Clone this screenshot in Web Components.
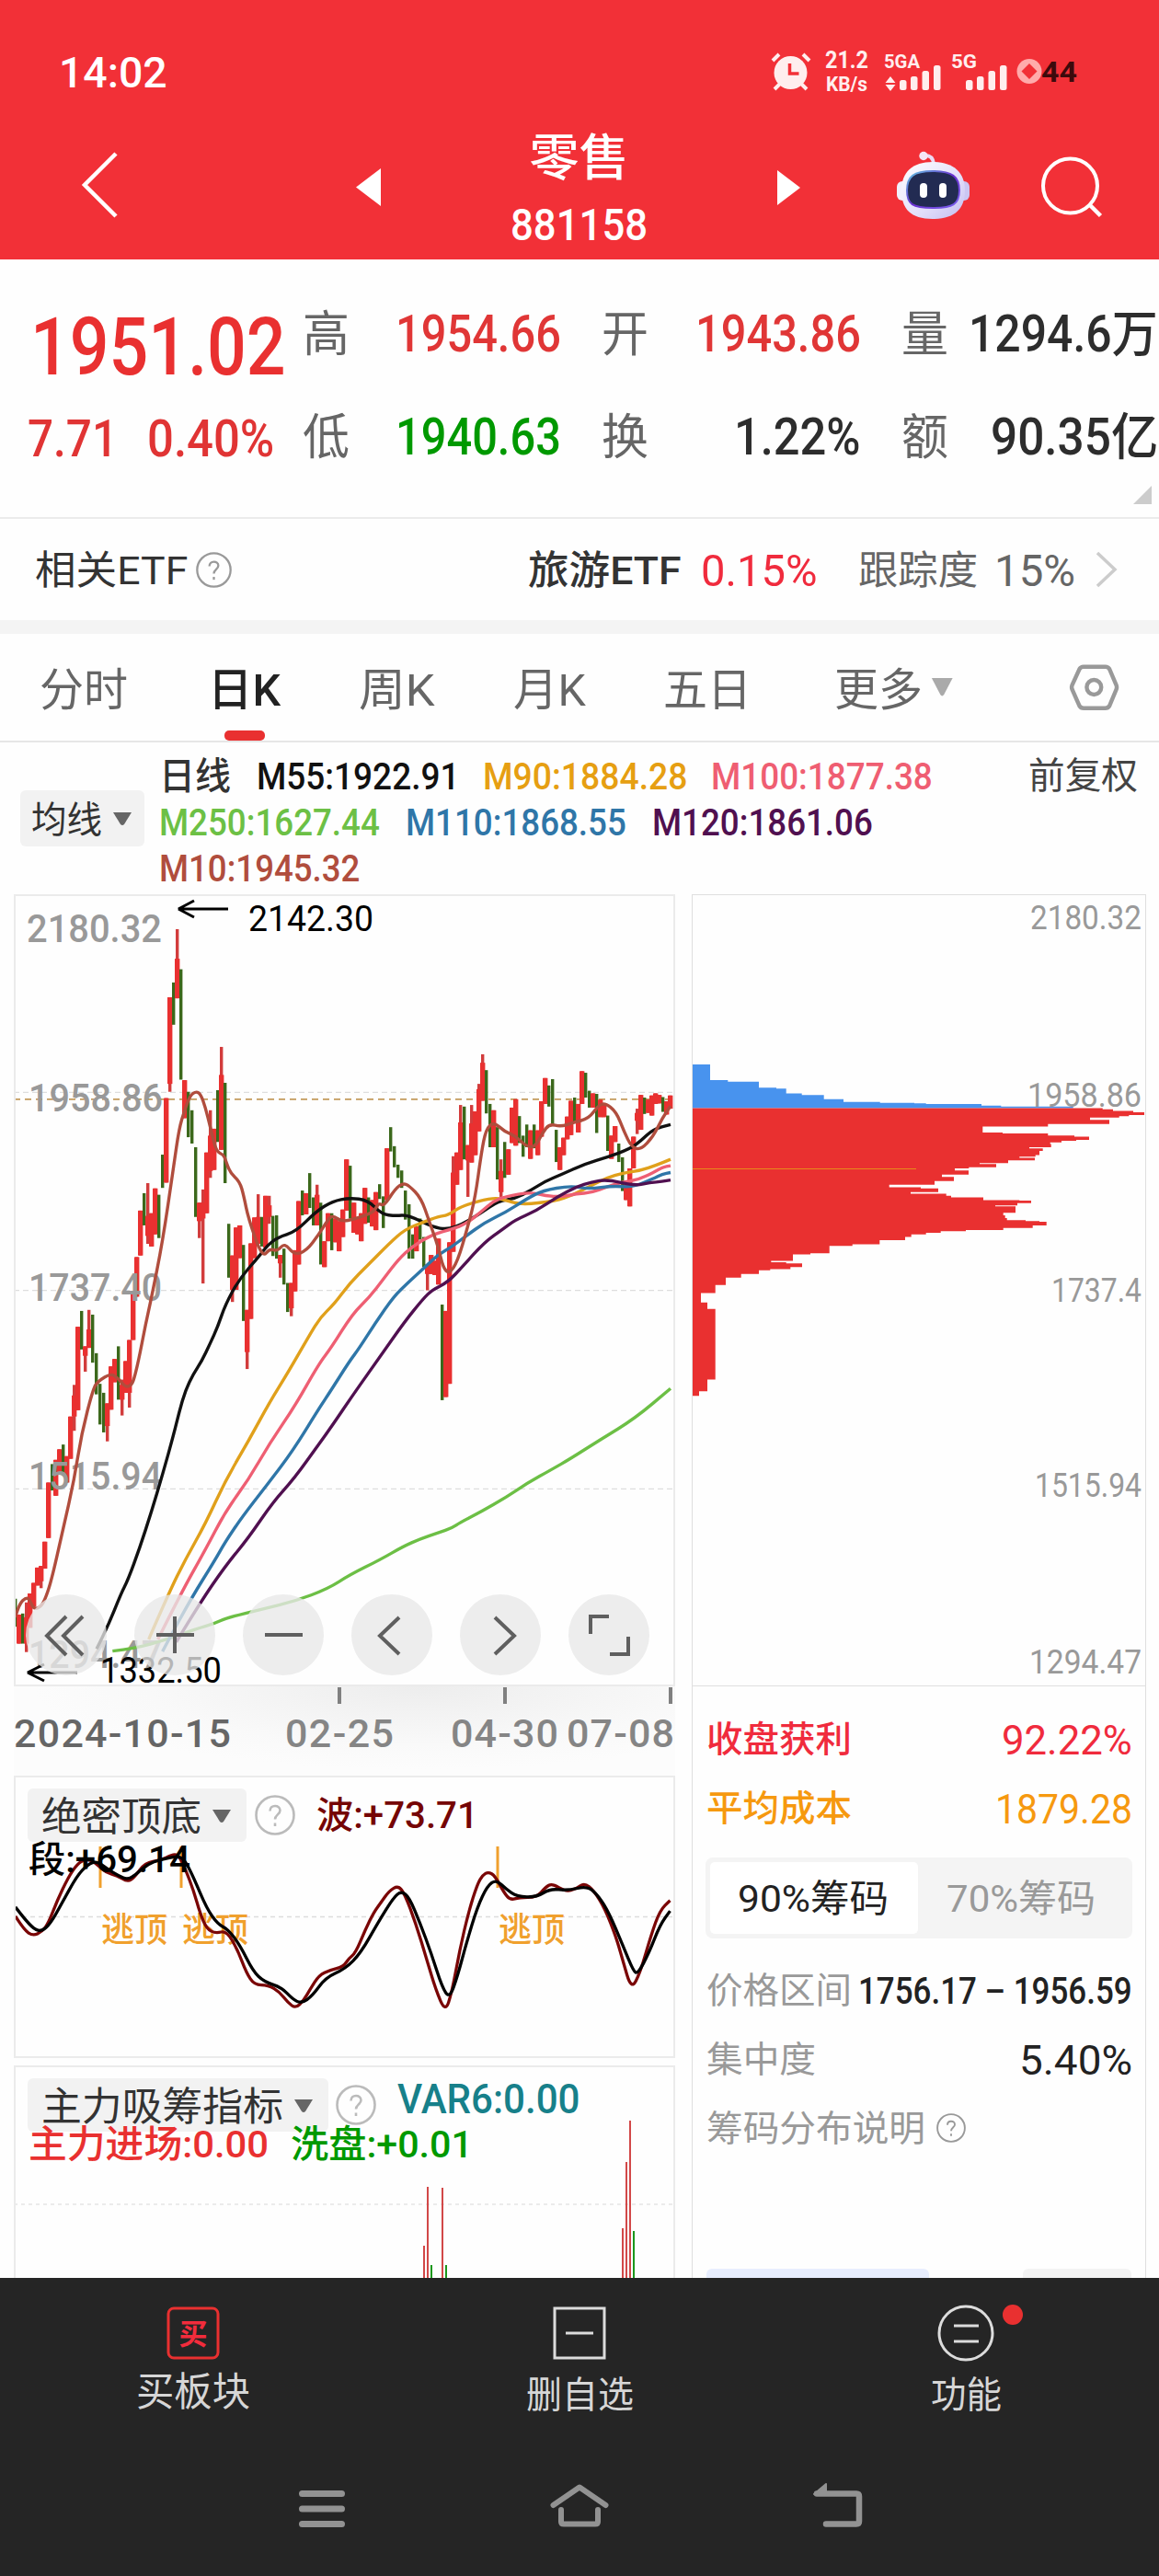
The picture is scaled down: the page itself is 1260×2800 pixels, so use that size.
<!DOCTYPE html>
<html lang="zh-CN">
<head>
<meta charset="UTF-8">
<title>零售 881158</title>
<style>
    body {
        margin: 0;
        width: 1260px;
        height: 2800px;
        overflow: hidden;
        background: #fefefe;
        color: #333;
        font-family: Roboto, "Noto Sans CJK SC", sans-serif;
    }
</style>
</head>
<body>
<app-header name="零售" code="881158"></app-header>
<quote-board></quote-board>
<etf-row></etf-row>
<period-tabs></period-tabs>
<ma-legend></ma-legend>
<chart-area>
    <k-chart slot="main"></k-chart>
    <date-axis slot="main"></date-axis>
    <indicator-panel slot="main" id="wave" style="height:307px">
        <pick-button slot="head" w="174">绝密顶底</pick-button>
        <help-icon slot="head" size="44" style="margin-left:9px;color:#bbb"></help-icon>
        <fit-text slot="head" w="176" size="40" style="margin:2px 0 0 23px;color:#750505;font-weight:500">波:+73.71</fit-text>
        <fit-text slot="values" w="176" size="40" style="color:#000;font-weight:500">段:+69.14</fit-text>
    </indicator-panel>
    <indicator-panel slot="main" id="force" style="height:260px;margin-top:8px;--lift:-6px">
        <pick-button slot="head" w="263">主力吸筹指标</pick-button>
        <help-icon slot="head" size="44" style="margin-left:8px;color:#bbb"></help-icon>
        <fit-text slot="head" w="199" size="44" style="margin:0 0 12px 23px;color:#17808a;font-weight:500">VAR6:0.00</fit-text>
        <fit-text slot="values" w="261" size="41" style="color:#e93030;font-weight:500">主力进场:0.00</fit-text>
        <fit-text slot="values" w="198" size="41" style="margin-left:24px;color:#009900;font-weight:500">洗盘:+0.01</fit-text>
    </indicator-panel>
    <chip-chart slot="side"></chip-chart>
    <chip-stats slot="side"></chip-stats>
</chart-area>
<bottom-bar></bottom-bar>

<script>
const FONT = 'Roboto, "Noto Sans CJK SC", sans-serif';

// base class: open shadow root filled from render()
class Base extends HTMLElement {
    connectedCallback() {
        if (this.shadowRoot) return;
        this.attachShadow({ mode: "open" });
        this.shadowRoot.innerHTML = this.render();
    }
}

// svg text, y is the middle of the digits
function label(x, y, w, size, text, fill, extra = "", adjust = "spacingAndGlyphs") {
    return `<text x="${x}" y="${y + size * 0.356}" textLength="${w}" lengthAdjust="${adjust}" font-size="${size}" fill="${fill}" ${extra}>${text}</text>`;
}

// TEXT OF A GIVEN WIDTH
class FitText extends Base {
    connectedCallback() {
        super.connectedCallback();
        const span = this.shadowRoot.querySelector("span");
        const natural = span.offsetWidth;
        if (natural) span.style.transform = `scaleX(${this.getAttribute("w") / natural})`;
    }
    render() {
        return `
            <style>
                :host { display: block; flex: none; width: ${this.getAttribute("w")}px; font-size: ${this.getAttribute("size")}px; line-height: 1; white-space: nowrap; }
                span { display: inline-block; transform-origin: 0 50%; }
            </style>
            <span><slot></slot></span>
        `;
    }
}

// QUESTION MARK IN A CIRCLE
class HelpIcon extends Base {
    render() {
        const s = this.getAttribute("size");
        return `
            <style>:host { display: block; flex: none; width: ${s}px; height: ${s}px; }</style>
            <svg width="${s}" height="${s}" viewBox="0 0 44 44" fill="none" stroke="currentColor" stroke-width="2.6">
                <circle cx="22" cy="22" r="20.5"/>
                <path d="M16.5 17.5c0-7.500 11-7 11-.8 0 4.600-5.500 4.800-5.500 9.800"/>
                <path d="M22 30.500v3.500"/>
            </svg>
        `;
    }
}

// GREY DROPDOWN BUTTON
class PickButton extends Base {
    render() {
        return `
            <style>
                :host { display: flex; flex: none; align-items: center; box-sizing: border-box; height: 58px; padding: 4px 17px 0 15px; gap: 12px; background: #f2f2f2; border-radius: 6px; color: #333; }
                svg { margin-bottom: 3px; }
            </style>
            <fit-text w="${this.getAttribute("w")}" size="${this.getAttribute("size") || 43}"><slot></slot></fit-text>
            <svg width="20" height="14"><path d="M0 0h20l-8 13q-2 2-4 0z" fill="#666"/></svg>
        `;
    }
}

// STATUS BAR + TITLE
class AppHeader extends Base {
    render() {
        const bars = x => [[0, 87], [12, 83], [24.5, 77], [37, 71]]
            .map(([dx, y]) => `<rect x="${x + dx}" y="${y}" width="7.500" height="${98 - y}" rx="2.500"/>`).join("");
        return `
            <style>
                :host { display: block; height: 282px; background: #f23037; color: #fff; }
                .status { display: flex; height: 120px; padding-left: 64px; font-weight: 500; }
                .status fit-text { margin: 56px auto 0 0; }
                .bar { display: flex; height: 162px; align-items: center; }
                .title { display: flex; flex-direction: column; align-items: center; width: 431px; height: 162px; }
            </style>
            <div class="status">
                <fit-text w="118" size="46">14:02</fit-text>
                <svg width="430" height="120" viewBox="830 0 430 120" font-family='${FONT}' fill="#ffeeee">
                    <circle cx="859.5" cy="79" r="18"/>
                    <path d="M840 66l7-7M873 59l7 7M849 90l-7 7M870 90l7 7" stroke="#ffeeee" stroke-width="4"/>
                    <path d="M858.500 69v11h10" fill="none" stroke="#f23037" stroke-width="3.500"/>
                    ${label(897, 65.5, 47, 25, "21.2", "#ffeeee", 'font-weight="700"')}
                    ${label(898, 91, 45, 22, "KB/s", "#ffeeee", 'font-weight="700"')}
                    ${label(961, 67, 39, 20, "5GA", "#ffeeee", 'font-weight="700"')}
                    <path d="M962.500 90l5.500-7 5.500 7zM962.500 92h11l-5.500 7z"/>
                    ${bars(978)}
                    ${label(1034, 67, 28, 20, "5G", "#ffeeee", 'font-weight="700"')}
                    ${bars(1050)}
                    <circle cx="1119" cy="77.5" r="13.500" fill="#ffabab"/>
                    <path d="M1119 69l8.500 8.500-8.500 8.500-8.500-8.500z" fill="#f23037"/>
                    ${label(1132, 77.5, 39, 31, "44", "#3d0a0c", 'font-weight="700"')}
                </svg>
            </div>
            <div class="bar">
                <svg width="130" height="162"><path d="M126 47L92 81l34 34" fill="none" stroke="#fff" stroke-width="4.500"/></svg>
                <svg width="284" height="162"><path d="M284 63v41l-27-20.500z" fill="#fff"/></svg>
                <div class="title">
                    <fit-text w="108" size="54" style="margin-top:26px;font-weight:500">${this.getAttribute("name")}</fit-text>
                    <fit-text w="149" size="49" style="margin-top:20px;font-weight:500">${this.getAttribute("code")}</fit-text>
                </div>
                <svg width="415" height="162" viewBox="845 120 415 162">
                    <defs>
                        <linearGradient id="shell" x1="0" y1="0" x2="1" y2="1"><stop offset="0" stop-color="#fff"/><stop offset=".6" stop-color="#e2defa"/><stop offset="1" stop-color="#c3bdf0"/></linearGradient>
                        <linearGradient id="rim" x1="0" y1="0" x2="1" y2="1"><stop offset="0" stop-color="#62c8e0"/><stop offset=".5" stop-color="#6a2fd0"/><stop offset="1" stop-color="#7a63ee"/></linearGradient>
                    </defs>
                    <path d="M845 185v38l25-19z" fill="#fff"/>
                    <path d="M1004 169q10-1 11 9" fill="none" stroke="#ecd9f2" stroke-width="4"/>
                    <circle cx="1004" cy="169.500" r="4.700" fill="#f5e6f6"/>
                    <rect x="975" y="197" width="14" height="21" rx="6" fill="#f1effc"/>
                    <rect x="1040" y="197" width="14" height="21" rx="6" fill="#cbc6f2"/>
                    <path d="M980 207c0-20 12-31 34-31s35 11 35 31-11 31-35 31-34-11-34-31z" fill="url(#shell)"/>
                    <path d="M986 207c0-15 7-21 28-21s29 6 29 21-7 19-29 19-28-4-28-19z" fill="#222b52" stroke="url(#rim)" stroke-width="2"/>
                    <rect x="1000" y="199" width="8" height="16" rx="4" fill="#fff"/><rect x="1021" y="199" width="8" height="16" rx="4" fill="#fff"/>
                    <circle cx="1163.500" cy="202" r="29.500" fill="none" stroke="#fff" stroke-width="4"/>
                    <path d="M1185 223l11.500 11.500" stroke="#fff" stroke-width="4.500"/>
                </svg>
            </div>
        `;
    }
}

// PRICE BOARD
class QuoteBoard extends Base {
    render() {
        const cells = [
            ["高", "1954.66", 176, "#e03636"], ["开", "1943.86", 176, "#e03636"], ["量", "1294.6万", 202, "#2d2d2d"],
            ["低", "1940.63", 176, "#009900"], ["换", "1.22%", 134, "#2d2d2d"], ["额", "90.35亿", 178, "#2d2d2d"]
        ];
        return `
            <style>
                :host { display: flex; position: relative; box-sizing: border-box; height: 282px; border-bottom: 2px solid #ebebeb; font-weight: 500; color: #e03434; }
                .now { width: 329px; padding-top: 51px; }
                .big { display: flex; align-items: center; height: 88px; padding-left: 33px; }
                .diff { display: flex; align-items: center; height: 112px; padding-left: 30px; gap: 32px; }
                .grid { display: grid; grid-template-columns: 281px 326px 323px; grid-template-rows: 112px 112px; padding-top: 25px; }
                .cell { display: flex; align-items: center; justify-content: space-between; }
                .cell:nth-child(3n+2) { padding-left: 44px; }
                .cell:nth-child(3n) { padding-left: 44px; }
                .name { color: #666; font-weight: 400; padding-top: 2px; }
                .corner { position: absolute; right: 8px; bottom: 14px; width: 20px; height: 20px; background: #ccc; clip-path: polygon(100% 0, 100% 100%, 0 100%); }
            </style>
            <div class="now">
                <div class="big"><fit-text w="278" size="88" style="color:#e93030">1951.02</fit-text></div>
                <div class="diff"><fit-text w="98" size="56">7.71</fit-text><fit-text w="138" size="56">0.40%</fit-text></div>
            </div>
            <div class="grid">
                ${cells.map(([n, v, w, c]) => `<div class="cell"><fit-text class="name" w="51" size="53">${n}</fit-text><fit-text w="${w + 4}" size="55" style="color:${c}">${v}</fit-text></div>`).join("")}
            </div>
            <div class="corner"></div>
        `;
    }
}

// RELATED ETF
class EtfRow extends Base {
    render() {
        return `
            <style>
                :host { display: flex; align-items: center; box-sizing: border-box; height: 125px; padding: 3px 0 0 38px; border-bottom: 15px solid #f4f4f4; color: #333; }
            </style>
            <fit-text w="166" size="43">相关ETF</fit-text>
            <help-icon size="39" style="margin:-3px 0 0 9px;color:#999"></help-icon>
            <fit-text w="167" size="43" style="margin-left:322px;font-weight:500">旅游ETF</fit-text>
            <fit-text w="126" size="49" style="margin-left:21px;color:#f02b3d">0.15%</fit-text>
            <fit-text w="130" size="43" style="margin-left:45px;color:#666">跟踪度</fit-text>
            <fit-text w="88" size="48" style="margin-left:18px;color:#666">15%</fit-text>
            <svg width="24" height="40" style="margin:-3px 0 0 22px"><path d="M2 2l19 18L2 38" fill="none" stroke="#ccc" stroke-width="3.500"/></svg>
        `;
    }
}

// PERIOD TABS
class PeriodTabs extends Base {
    render() {
        return `
            <style>
                :host { display: flex; box-sizing: border-box; height: 118px; border-bottom: 2px solid #e6e6e6; color: #666; padding-left: 43px; }
                fit-text { margin-top: 37px; }
                .on { color: #222; font-weight: 500; }
                .tab { display: flex; flex-direction: column; align-items: center; justify-content: space-between; margin: 0 83px 0 87px; }
                .tab i { width: 44px; height: 11px; border-radius: 5px; background: #e93030; }
            </style>
            <fit-text w="96" size="49">分时</fit-text>
            <div class="tab"><fit-text class="on" w="79" size="49">日K</fit-text><i></i></div>
            <fit-text w="83" size="49" style="margin-left:2px">周K</fit-text>
            <fit-text w="79" size="49" style="margin-left:85px">月K</fit-text>
            <fit-text w="96" size="49" style="margin-left:84px">五日</fit-text>
            <fit-text w="96" size="49" style="margin-left:90px">更多</fit-text>
            <svg width="260" height="116" viewBox="1000 689 260 116">
                <path d="M1010 737h23l-9.500 18q-2 3-4 0z" fill="#aaa"/>
                <path d="M1177 724.500h24q3 0 4.500 2.500l7.500 17.500q1 2.500 0 5l-7.500 18q-1.500 2.500-4.500 2.500h-24q-3 0-4.500-2.500l-8-18q-1-2.500 0-5l8-17.500q1.500-2.500 4.500-2.500z" fill="none" stroke="#999" stroke-width="4.500"/>
                <circle cx="1188.500" cy="747" r="8" fill="none" stroke="#999" stroke-width="4.500"/>
            </svg>
        `;
    }
}

// MOVING AVERAGE VALUES
class MaLegend extends Base {
    render() {
        const item = (w, c, t, gap = 28) => `<fit-text w="${w}" size="41" style="color:${c};margin-right:${gap}px">${t}</fit-text>`;
        return `
            <style>
                :host { display: flex; height: 165px; font-weight: 500; }
                .pick { width: 173px; padding-left: 22px; box-sizing: border-box; }
                pick-button { margin-top: 52px; height: 61px; width: 135px; padding: 4px 14px 0 12px; gap: 12px; font-weight: 400; }
                .rows { flex: 1; padding-top: 12px; }
                .row { display: flex; align-items: center; height: 50px; }
            </style>
            <div class="pick"><pick-button w="77" size="40">均线</pick-button></div>
            <div class="rows">
                <div class="row">${item(78, "#333", "日线")}${item(220, "#111", "M55:1922.91", 26)}${item(222, "#e69f12", "M90:1884.28", 26)}${item(241, "#ef5e72", "M100:1877.38", 104)}<fit-text w="119" size="40" style="color:#444;font-weight:400">前复权</fit-text></div>
                <div class="row">${item(240, "#6cc045", "M250:1627.44")}${item(240, "#2f76a8", "M110:1868.55")}${item(240, "#501050", "M120:1861.06")}</div>
                <div class="row">${item(218, "#b04d3d", "M10:1945.32")}</div>
            </div>
        `;
    }
}

// TWO COLUMNS UNDER THE LEGEND
class ChartArea extends Base {
    render() {
        return `
            <style>
                :host { display: flex; gap: 18px; height: 1504px; padding-left: 15px; overflow: hidden; }
                .main { width: 719px; }
                .side { width: 494px; box-sizing: border-box; border: solid #dfdfdf; border-width: 1px 1px 0; }
            </style>
            <div class="main"><slot name="main"></slot></div>
            <div class="side"><slot name="side"></slot></div>
        `;
    }
}

// candles: colour, high, low and, where the wick shows, body top and bottom
const CANDLES = `g1355 1408,r1385 1440,g1383 1440,r1362 1456 1390 1440,r1345 1410,r1325 1370,r1296 1330,r1293 1335 1293 1322,r1247 1298,r1135 1240,
g1100 1150,r1092 1160,r1072 1120,g1063 1122,r1085 1135,r1010 1090,r950 1037 970 1010,r840 998,g810 883,r877 925 877 895,
r808 880 845 880,g817 908,g890 968,g948 1025,g965 1040,r985 1057 985 1028,r915 997,r901 945,g877 978,r940 1008 950 978,
r905 965,r865 993 865 965,r775 865,r708 783,r620 705,g587 648,r568 683 630 668,r625 688,r578 665,g590 672,
g514 577,r407 567,r216 395 216 380,g188 268,r87 218 143 218,g163 372,r373 445,g395 481,g430 493,g500 632,
r605 672 605 640,r580 758 605 635,r510 625,r430 558 478 545,r465 543,g392 490,r310 505 363 505,g378 568,g645 747,r705 793 705 770,
r652 770,r648 710,g685 829,r808 920 808 888,r682 825,r633 710,r589 683 632 683,g632 688,r592 690,r592 645 610 632,
g630 706,g629 711,r704 747 704 720,g692 760,g757 812,r757 820 757 805,r695 773,r602 722,g582 629,r587 627,
g549 615,g595 648,r571 648 590 648,g605 722,r678 727,r625 678,g625 695,r635 680,r640 697,r618 670,
r523 620,g535 635,r605 662,r635 665,r625 678,r577 645,g595 643,r600 650,r585 657,g570 598,
g593 653,r502 600,g462 508,g498 538,g533 558,g544 577,g582 637,g608 711,g665 711,r650 697,
g635 675,g670 727,r722 771 722 740,r704 740,r715 742,r673 760,g798 979,r810 973,r680 948,r517 698 548 698,
r510 571,r420 543 453 543,g423 523,r496 594 496 525,r420 529 455 529,r432 515,r380 470 390 470,r324 412 340 412,g354 436,g418 500,
r430 500,g462 561,r523 594 545 585,g490 558,r504 552,r425 492,r409 497,g441 492,g478 518,g457 500,
r468 522,g457 502,r468 515,r413 480,r369 418,g383 423,g371 460,g467 528,r500 543,r482 515,
r442 485,r412 477,g406 454,r418 472,r356 418,g359 406,g393 425,r398 425,g399 473,r410 443,
r420 443,g440 507,r478 522,r460 490,g493 528,g519 583,r570 600,r540 612,r480 540,r427 475 435 450,
r401 467,g406 437,r410 435,r402 440,r398 418,r401 417,g405 433,r413 438,r402 427`;

const AVERAGES = {
    "#6cbf45": "367,1454 440,1449 540,1433 640,1412 700,1402 740,1391 860,1374 960,1360 1070,1336 1140,1310 1240,1281 1315,1256 1370,1242 1430,1230 1475,1221 1500,1211 1570,1190 1650,1163 1720,1136 1800,1110 1860,1090 1960,1053 2070,1014 2187,957",
    "#111111": "315,1450 350,1410 395,1345 417,1320 455,1260 494,1190 530,1120 566,1045 585,1000 605,960 630,930 658,905 685,872 710,840 735,798 780,750 850,703 870,687 905,671 965,660 1030,622 1085,602 1140,596 1200,600 1245,627 1290,630 1330,628 1410,651 1460,656 1510,645 1570,624 1625,602 1680,597 1730,582 1780,564 1830,552 1910,531 1980,519 2055,503 2090,488 2130,466 2187,457",
    "#e0a01b": "485,1432 550,1345 605,1280 670,1213 735,1131 810,1057 880,982 940,926 1010,855 1045,822 1090,797 1140,758 1200,723 1270,682 1320,656 1380,642 1430,631 1460,629 1510,610 1610,595 1645,600 1700,609 1810,602 1870,590 1930,572 1980,558 2030,549 2090,544 2140,534 2187,523",
    "#ee5f73": "515,1432 590,1345 670,1262 735,1190 810,1130 880,1060 960,992 1040,910 1080,880 1150,815 1205,784 1250,750 1300,712 1345,688 1410,665 1475,655 1520,645 1570,622 1610,602 1650,593 1730,585 1780,592 1830,594 1880,588 1930,586 1980,575 2030,566 2080,562 2130,548 2160,538 2187,535",
    "#2f76a8": "530,1455 545,1438 625,1353 700,1283 735,1247 790,1200 870,1140 955,1075 1040,995 1080,960 1140,905 1170,882 1225,832 1285,782 1330,757 1390,725 1430,703 1470,690 1520,668 1580,643 1650,623 1720,597 1770,582 1860,573 1920,579 2000,573 2060,576 2130,560 2160,551 2187,548",
    "#501050": "575,1437 650,1365 735,1293 810,1240 890,1172 960,1127 1040,1062 1080,1030 1150,970 1245,892 1320,830 1380,787 1410,770 1460,756 1510,725 1580,680 1640,655 1680,638 1750,620 1820,593 1880,575 1930,566 1980,561 2070,573 2120,567 2160,565 2187,562",
    "#b04d3d": "50,1390 62,1365 86,1352 98,1358 110,1375 134,1370 150,1352 170,1315 206,1222 242,1130 266,1042 304,957 320,943 362,928 386,938 410,955 430,950 440,933 455,895 475,835 494,785 530,680 566,538 584,465 602,430 620,402 640,394 655,400 670,425 686,462 705,508 728,514 735,523 750,548 782,565 795,592 810,635 855,709 880,692 905,697 928,681 960,704 1000,696 1040,665 1070,637 1085,629 1115,641 1155,636 1185,630 1220,622 1235,605 1252,612 1290,578 1315,568 1335,573 1373,596 1400,640 1430,690 1445,728 1465,740 1492,717 1526,650 1550,595 1570,510 1585,466 1610,452 1645,470 1680,478 1715,498 1745,500 1770,472 1792,456 1830,461 1870,453 1920,446 1950,422 1973,416 2010,433 2035,470 2060,500 2090,505 2130,480 2160,445 2187,422"
};

const px = v => +(v / 3).toFixed(2);
const py = v => +(960 + v / 1.7422).toFixed(2);

// smooth path through the points
function curve(points, sx, sy) {
    const p = points.split(" ").map(s => s.split(",").map(Number)).map(([x, y]) => [sx(x), sy(y)]);
    let d = `M${p[0]}`;
    for (let i = 1; i < p.length - 1; i++) {
        d += `Q${p[i]} ${(p[i][0] + p[i + 1][0]) / 2},${(p[i][1] + p[i + 1][1]) / 2}`;
    }
    return d + `L${p[p.length - 1]}`;
}

// CANDLE CHART
class KChart extends Base {
    render() {
        const candles = CANDLES.split(",").map((s, i) => {
            s = s.trim();
            const x = 16.7 + i * 4;
            const [hi, lo, top = hi, bottom = lo] = s.slice(1).split(" ").map(Number);
            const bar = (w, a, b, c) => `<rect x="${(x - w / 2).toFixed(2)}" y="${py(a)}" width="${w}" height="${(py(b) - py(a)).toFixed(2)}" fill="${c}"/>`;
            if (s[0] === "g") return bar(3.4, hi, lo, "#3b681b");
            return bar(3.4, hi, lo, "#d23c3c") + bar(5.4, top, bottom, "#e93030");
        }).join("");
        const lines = Object.entries(AVERAGES).map(([c, p]) => `<path d="${curve(p, px, py)}" fill="none" stroke="${c}" stroke-width="3.4"/>`).join("");
        const grey = 'font-weight="500"';
        return `
            <style>
                :host { display: block; position: relative; box-sizing: border-box; width: 719px; height: 861px; border: 2px solid #ebebeb; }
                svg { display: block; }
                .tools { position: absolute; left: 11px; bottom: 10px; display: flex; gap: 30px; }
                .tools svg { width: 88px; height: 88px; border-radius: 50%; background: rgba(232, 232, 232, .78); fill: none; stroke: #5f5f5f; stroke-width: 4; }
            </style>
            <svg width="715" height="857" viewBox="17 974 715 857" font-family='${FONT}'>
                <path d="M15 1187.300h720M15 1402.600h720M15 1618.300h720" stroke="#dedede" stroke-width="1.300" stroke-dasharray="6 4"/>
                <path d="M15 1194.800h720" stroke="#c39a5c" stroke-width="1.700" stroke-dasharray="7 5"/>
                ${candles}
                ${label(29, 1008.5, 147, 43, "2180.32", "#999", grey)}
                ${label(31, 1193, 146, 43, "1958.86", "#999", grey)}
                ${label(31, 1398.5, 145, 43, "1737.40", "#999", grey)}
                ${label(31, 1603.5, 145, 43, "1515.94", "#999", grey)}
                ${label(31, 1797.5, 145, 43, "1294.47", "#999", grey)}
                ${lines}
                <path d="M248 988h-54l17-9M194 988l17 9M84 1818H30l18-9M30 1818l18 9" fill="none" stroke="#000" stroke-width="3"/>
                ${label(270, 998, 136, 39, "2142.30", "#000")}
                ${label(109, 1815.5, 132, 38, "1332.50", "#000")}
            </svg>
            <div class="tools">
                <svg viewBox="0 0 88 88"><path d="M44 24L23 45l21 21M62 24L41 45l21 21"/></svg>
                <svg viewBox="0 0 88 88"><path d="M24 44h41M44 24v40"/></svg>
                <svg viewBox="0 0 88 88"><path d="M24 44h41"/></svg>
                <svg viewBox="0 0 88 88"><path d="M52 25L31 45l21 20"/></svg>
                <svg viewBox="0 0 88 88"><path d="M38 25l21 20-21 20"/></svg>
                <svg viewBox="0 0 88 88"><path d="M24 43V24h20M65 46v19H45"/></svg>
            </div>
        `;
    }
}

// DATES
class DateAxis extends Base {
    render() {
        return `
            <style>
                :host { display: block; height: 97px; background: radial-gradient(ellipse 420px 90px at 440px 0, #ededed, #f9f9f9 70%, #fcfcfc); }
                svg { display: block; }
            </style>
            <svg width="719" height="97" viewBox="15 1833 719 97" font-family='${FONT}'>
                <path d="M369 1834v18M549 1834v18M729 1834v18" stroke="#808080" stroke-width="4"/>
                ${label(15, 1883.5, 236, 43, "2024-10-15", "#666", 'font-weight="500"', "spacing")}
                ${label(310, 1883.5, 118, 43, "02-25", "#858585", 'font-weight="500"', "spacing")}
                ${label(490, 1883.5, 117, 43, "04-30", "#858585", 'font-weight="500"', "spacing")}
                ${label(616, 1883.5, 117, 43, "07-08", "#858585", 'font-weight="500"', "spacing")}
            </svg>
        `;
    }
}

const WAVE = "35,1128 55,1170 75,1188 95,1175 110,1150 130,1080 155,1010 175,970 195,953 215,963 240,995 265,1003 290,1024 305,1010 330,965 365,958 390,941 405,940 420,980 440,1050 455,1120 470,1167 490,1180 515,1172 540,1230 560,1300 578,1337 610,1338 635,1358 655,1392 672,1408 690,1385 705,1350 725,1308 750,1292 780,1282 793,1256 808,1240 830,1170 850,1115 865,1088 885,1050 905,1035 920,1060 945,1150 970,1260 990,1350 1012,1420 1027,1360 1045,1230 1065,1115 1085,1030 1097,1003 1110,993 1125,1005 1145,1055 1160,1079 1180,1071 1220,1070 1240,1040 1255,1028 1285,1053 1310,1045 1328,1026 1350,1050 1375,1105 1400,1190 1415,1260 1435,1352 1455,1300 1480,1185 1500,1110 1523,1080";
const SEGMENT = "35,1100 55,1135 78,1168 95,1174 115,1150 140,1090 175,1005 200,970 220,960 245,985 270,1005 290,1017 310,1000 335,970 365,955 405,945 420,957 440,1010 470,1105 495,1152 518,1168 545,1215 575,1295 600,1327 640,1345 665,1380 685,1394 710,1370 740,1315 785,1288 820,1240 860,1145 895,1070 912,1052 930,1070 955,1150 980,1240 1005,1345 1022,1378 1040,1310 1060,1210 1085,1100 1108,1035 1128,1017 1150,1045 1175,1068 1220,1070 1250,1044 1290,1050 1335,1036 1360,1065 1385,1120 1415,1215 1440,1296 1450,1303 1475,1240 1500,1155 1523,1112";

// SUB CHARTS
class IndicatorPanel extends Base {
    plot() {
        if (this.id === "wave") {
            const sx = v => +(v / 2.0907).toFixed(2);
            const sy = v => +(1680 + v / 2.8).toFixed(2);
            return `
                <svg width="715" height="303" viewBox="17 1932 715 303" font-family='${FONT}'>
                    <path d="M15 2083.500h720" stroke="#ddd" stroke-width="1.500" stroke-dasharray="5 4"/>
                    <path d="M109 2007v45M197 2007v45M541 2007v45" stroke="#f0a02d" stroke-width="3"/>
                    ${label(110, 2097.5, 72, 37, "逃顶", "#f0a02d", 'font-weight="500"')}
                    ${label(198, 2097.5, 72, 37, "逃顶", "#f0a02d", 'font-weight="500"')}
                    ${label(542, 2097.5, 72, 37, "逃顶", "#f0a02d", 'font-weight="500"')}
                    <path d="${curve(WAVE, sx, sy)}" fill="none" stroke="#7a0606" stroke-width="3.3"/>
                    <path d="${curve(SEGMENT, sx, sy)}" fill="none" stroke="#000" stroke-width="3.3"/>
                </svg>`;
        }
        return `
            <svg width="715" height="229" viewBox="17 2247 715 229">
                <path d="M15 2396h720" stroke="#ebebeb" stroke-width="2" stroke-dasharray="4 4"/>
                <path d="M461 2441v40M465 2377v100M481 2378v100M677 2422v60M681 2350v130M685 2305v180" stroke="#d24848" stroke-width="2"/>
                <path d="M469 2462v20M485 2462v20M689 2425v60" stroke="#1c971c" stroke-width="2"/>
            </svg>`;
    }
    render() {
        return `
            <style>
                :host { display: block; position: relative; box-sizing: border-box; width: 719px; border: 2px solid #ebebeb; }
                svg { position: absolute; inset: 0; }
                .head, .values { position: relative; display: flex; align-items: center; }
                .head { height: 58px; padding: 12px 0 0 13px; }
                .values { height: 40px; padding-left: 14px; margin-top: var(--lift, 0); }
            </style>
            ${this.plot()}
            <div class="head"><slot name="head"></slot></div>
            <div class="values"><slot name="values"></slot></div>
        `;
    }
}

// chip distribution: start of the step, bar end
const BLUE_CHIPS = "343,96 373,154 376,255 387,312 389,344 398,395 401,467 409,531 414,650 416,762 417,800 418,981 421,1045 423,1280 426,0";
const RED_CHIPS = "426,1376 428,1410 431,1476 434,1512 439,1462 441,1430 444,1335 448,1398 456,1198 461,985 472,1050 474,1198 478,1284 480,1332 486,1290 488,1242 491,1205 494,1208 500,1137 502,1181 507,1170 515,1157 518,1105 520,1155 525,1068 530,975 532,1029 538,940 540,894 544,939 552,852 556,891 564,828 571,680 576,783 578,840 585,750 588,866 592,882 595,987 600,1105 601,1143 606,1098 610,1026 612,1092 624,1052 629,1058 634,1064 638,1125 640,1170 641,1193 648,1148 653,1052 657,930 659,848 662,800 665,752 670,732 676,649 684,560 687,485 701,423 703,366 715,295 718,344 720,396 727,358 731,292 733,255 740,197 747,147 761,113 776,66 794,87 806,113 940,87 962,60 971,0";

class ChipChart extends Base {
    steps(data) {
        const s = data.split(" ").map(p => p.split(",").map(Number));
        let d = `M753,${py(s[0][0])}`;
        s.slice(0, -1).forEach(([y, x], i) => {
            const ex = (740 + x / 3).toFixed(1);
            d += `L${ex},${py(y)}L${ex},${py(s[i + 1][0])}`;
        });
        return d + `L753,${py(s[s.length - 1][0])}Z`;
    }
    render() {
        return `
            <style>
                :host { display: block; height: 860px; border-bottom: 1px solid #dfdfdf; box-sizing: border-box; }
                svg { display: block; overflow: visible; }
            </style>
            <svg width="492" height="859" viewBox="753 973 492 859" font-family='${FONT}'>
                <path d="${this.steps(BLUE_CHIPS)}" fill="#4893ee"/>
                ${label(1120, 997, 121, 36, "2180.32", "#999")}
                ${label(1117, 1190, 124, 36, "1958.86", "#999")}
                <path d="${this.steps(RED_CHIPS)}" fill="#e93030"/>
                <path d="M753 1270.500h243" stroke="#e88a1c" stroke-width="1.200"/>
                ${label(1143, 1402, 98, 36, "1737.4", "#999")}
                ${label(1125, 1614.5, 116, 36, "1515.94", "#999")}
                ${label(1119, 1806, 122, 36, "1294.47", "#999")}
            </svg>
        `;
    }
}

class ChipStats extends Base {
    render() {
        return `
            <style>
                :host { display: block; padding: 21px 14px 0 15px; color: #999; }
                .row { display: flex; align-items: center; justify-content: space-between; height: 75px; }
                .switch { display: flex; margin: 15px 0 20px -1px; padding: 5px; width: 454px; height: 78px; background: #f4f4f4; border-radius: 8px; }
                .switch div { flex: 1; display: flex; align-items: center; justify-content: center; padding: 3px 4px 0 0; border-radius: 5px; }
                .switch .on { background: #fff; color: #222; padding: 3px 2px 0 0; }
                .next { display: flex; justify-content: space-between; margin: 114px 1px 0 0; }
                .next i { height: 60px; width: 242px; border-radius: 6px; background: #e8eefe; }
                .next i + i { width: 118px; background: #f3f3f3; }
            </style>
            <div class="row" style="color:#f02b3d;font-weight:500"><fit-text w="158" size="39">收盘获利</fit-text><fit-text w="142" size="44" style="font-weight:400">92.22%</fit-text></div>
            <div class="row" style="color:#f6990f;font-weight:500"><fit-text w="158" size="39">平均成本</fit-text><fit-text w="149" size="44" style="font-weight:400">1879.28</fit-text></div>
            <div class="switch">
                <div class="on"><fit-text w="164" size="41">90%筹码</fit-text></div>
                <div><fit-text w="162" size="41">70%筹码</fit-text></div>
            </div>
            <div class="row"><fit-text w="158" size="39">价格区间</fit-text><fit-text w="298" size="40" style="color:#222;font-weight:500">1756.17 – 1956.59</fit-text></div>
            <div class="row"><fit-text w="119" size="39">集中度</fit-text><fit-text w="123" size="44" style="color:#222">5.40%</fit-text></div>
            <div class="row" style="justify-content:flex-start;gap:12px"><fit-text w="238" size="39">筹码分布说明</fit-text><help-icon size="32" style="margin-top:-4px"></help-icon></div>
            <div class="next"><i></i><i></i></div>
        `;
    }
}

// BOTTOM BAR + SYSTEM KEYS
class BottomBar extends Base {
    render() {
        return `
            <style>
                :host { display: block; height: 324px; background: #252525; color: #d6d6d6; }
                .menu { display: grid; grid-template-columns: repeat(3, 1fr); height: 186px; }
                .menu div { display: flex; flex-direction: column; align-items: center; padding-top: 20px; gap: 12px; }
                .keys { display: flex; justify-content: center; gap: 216px; padding-top: 34px; }
                svg { flex: none; fill: none; stroke: #dcdcdc; stroke-width: 3; overflow: visible; }
                .keys svg { stroke: #929292; stroke-width: 7; stroke-linecap: round; stroke-linejoin: round; }
            </style>
            <div class="menu">
                <div><svg width="80" height="80"><rect x="13" y="13" width="54" height="54" rx="6" stroke="#e93030"/><text x="24.500" y="52" font-size="31" font-weight="700" font-family='"Noto Sans CJK SC", sans-serif' fill="#f22c3c" stroke="none">买</text></svg><fit-text w="124" size="43" style="margin-top:-9px">买板块</fit-text></div>
                <div><svg width="80" height="80"><path d="M13 13h54v54h-54zM25 40h30"/></svg><fit-text w="117" size="40" style="margin-top:-4px">删自选</fit-text></div>
                <div><svg width="80" height="80"><circle cx="40" cy="40" r="29"/><path d="M27 32h27M27 49h27"/><circle cx="91" cy="20" r="11" fill="#e93030" stroke="none"/></svg><fit-text w="77" size="40" style="margin-top:-4px">功能</fit-text></div>
            </div>
            <div class="keys">
                <svg width="64" height="64"><path d="M10.500 14.500h43M10.500 31h43M10.500 47.500h43"/></svg>
                <svg width="64" height="64"><path d="M3.500 27L32 7.500 60.500 27M12 32v13q0 2.500 3 2.500h34q3 0 3-2.500V32" stroke-width="6"/></svg>
                <svg width="64" height="64"><path d="M10 14.500h43q3 0 3 3v27q0 3-3 3H20" stroke-width="6.500"/><path d="M7 15L20 4v11z" fill="#929292" stroke-width="2"/></svg>
            </div>
        `;
    }
}

customElements.define("fit-text", FitText);
customElements.define("help-icon", HelpIcon);
customElements.define("pick-button", PickButton);
customElements.define("app-header", AppHeader);
customElements.define("quote-board", QuoteBoard);
customElements.define("etf-row", EtfRow);
customElements.define("period-tabs", PeriodTabs);
customElements.define("ma-legend", MaLegend);
customElements.define("chart-area", ChartArea);
customElements.define("k-chart", KChart);
customElements.define("date-axis", DateAxis);
customElements.define("indicator-panel", IndicatorPanel);
customElements.define("chip-chart", ChipChart);
customElements.define("chip-stats", ChipStats);
customElements.define("bottom-bar", BottomBar);
</script>
</body>
</html>
